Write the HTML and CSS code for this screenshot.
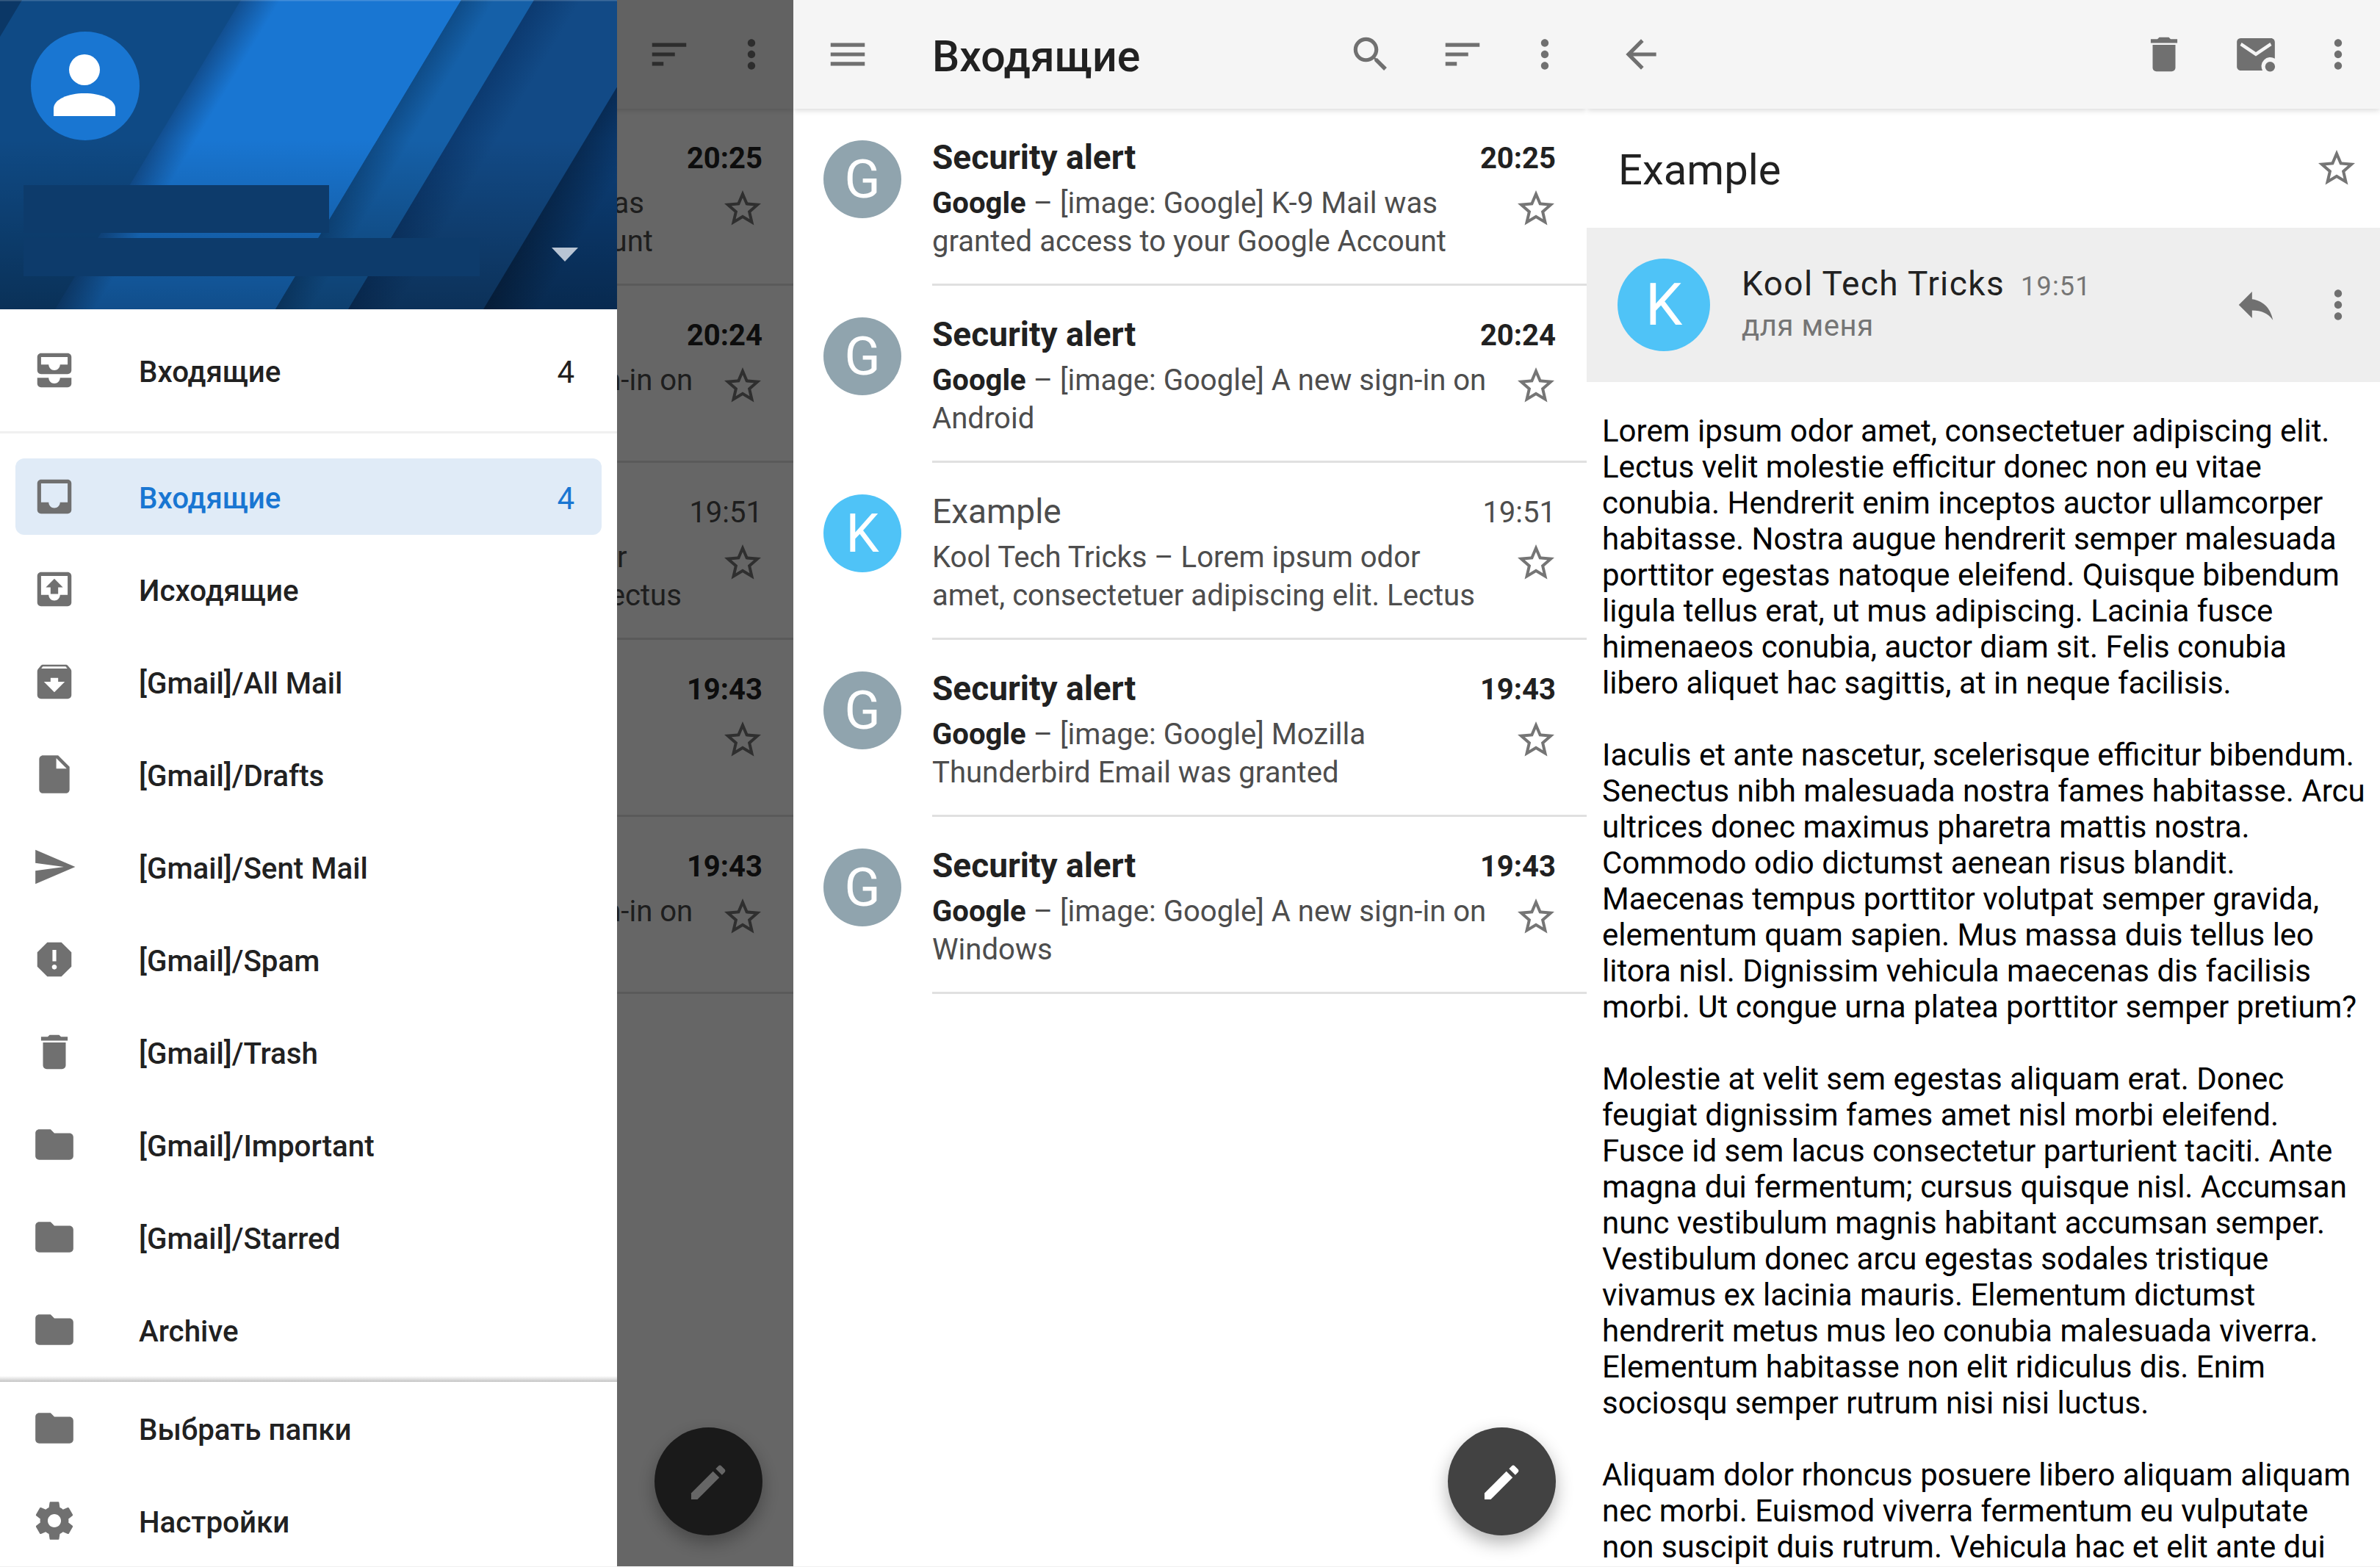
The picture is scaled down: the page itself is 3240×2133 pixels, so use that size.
FILE: index.html
```html
<!DOCTYPE html>
<html lang="ru">
<head>
    <meta charset="UTF-8">
    <title>Входящие</title>
    <link rel="stylesheet" href="styles.css">
</head>
<body>

    <!-- icon set -->
    <svg class="sprite" xmlns="http://www.w3.org/2000/svg">
        <symbol id="i-all-inbox" viewBox="0 0 24 24"><path d="M19 3H5c-1.1 0-2 .9-2 2v7c0 1.1.9 2 2 2h14c1.1 0 2-.9 2-2V5c0-1.1-.9-2-2-2zm0 6h-4c0 1.62-1.38 3-3 3s-3-1.38-3-3H5V5h14v4zm-4 7h6v3c0 1.1-.9 2-2 2H5c-1.1 0-2-.9-2-2v-3h6c0 1.66 1.34 3 3 3s3-1.34 3-3z"/></symbol>
        <symbol id="i-inbox" viewBox="0 0 24 24"><path d="M19 3H5c-1.1 0-2 .9-2 2v14c0 1.1.9 2 2 2h14c1.1 0 2-.9 2-2V5c0-1.1-.9-2-2-2zm0 12h-4c0 1.66-1.35 3-3 3s-3-1.34-3-3H5V5h14v10z"/></symbol>
        <symbol id="i-outbox" viewBox="0 0 24 24"><path d="M19 3H5c-1.1 0-2 .9-2 2v14c0 1.1.9 2 2 2h14c1.1 0 2-.9 2-2V5c0-1.1-.9-2-2-2zm0 12h-4c0 1.66-1.35 3-3 3s-3-1.34-3-3H5V5h14v10z"/><path d="M7.5 11H10v3.5h4V11h2.5L12 6.5z"/></symbol>
        <symbol id="i-archive" viewBox="0 0 24 24"><path d="M20.54 5.23l-1.39-1.68C18.88 3.21 18.47 3 18 3H6c-.47 0-.88.21-1.16.55L3.46 5.23C3.17 5.57 3 6.02 3 6.5V19c0 1.1.9 2 2 2h14c1.1 0 2-.9 2-2V6.5c0-.48-.17-.93-.46-1.27zM12 17.5L6.5 12H10v-2h4v2h3.5L12 17.5zM5.12 5l.81-1h12l.94 1H5.12z"/></symbol>
        <symbol id="i-draft" viewBox="0 0 24 24"><path d="M6 2c-1.1 0-1.99.9-1.99 2L4 20c0 1.1.89 2 1.99 2H18c1.1 0 2-.9 2-2V8l-6-6H6zm7 7V3.5L18.5 9H13z"/></symbol>
        <symbol id="i-send" viewBox="0 0 24 24"><path d="M2.01 21L23 12 2.01 3 2 10l15 2-15 2z"/></symbol>
        <symbol id="i-report" viewBox="0 0 24 24"><path d="M15.73 3H8.27L3 8.27v7.46L8.27 21h7.46L21 15.73V8.27L15.73 3zM12 17.3c-.72 0-1.3-.58-1.3-1.3 0-.72.58-1.3 1.3-1.3.72 0 1.3.58 1.3 1.3 0 .72-.58 1.3-1.3 1.3zm1-4.3h-2V7h2v6z"/></symbol>
        <symbol id="i-delete" viewBox="0 0 24 24"><path d="M6 19c0 1.1.9 2 2 2h8c1.1 0 2-.9 2-2V7H6v12zM19 4h-3.5l-1-1h-5l-1 1H5v2h14V4z"/></symbol>
        <symbol id="i-folder" viewBox="0 0 24 24"><path d="M10 4H4c-1.1 0-1.99.9-1.99 2L2 18c0 1.1.9 2 2 2h16c1.1 0 2-.9 2-2V8c0-1.1-.9-2-2-2h-8l-2-2z"/></symbol>
        <symbol id="i-settings" viewBox="0 0 24 24"><path d="M19.43 12.98c.04-.32.07-.64.07-.98s-.03-.66-.07-.98l2.11-1.65c.19-.15.24-.42.12-.64l-2-3.46c-.12-.22-.39-.3-.61-.22l-2.49 1c-.52-.4-1.08-.73-1.69-.98l-.38-2.65C14.46 2.18 14.25 2 14 2h-4c-.25 0-.46.18-.49.42l-.38 2.65c-.61.25-1.17.59-1.69.98l-2.49-1c-.23-.09-.49 0-.61.22l-2 3.46c-.13.22-.07.49.12.64l2.11 1.65c-.04.32-.07.65-.07.98s.03.66.07.98l-2.11 1.65c-.19.15-.24.42-.12.64l2 3.46c.12.22.39.3.61.22l2.49-1c.52.4 1.08.73 1.69.98l.38 2.65c.03.24.24.42.49.42h4c.25 0 .46-.18.49-.42l.38-2.65c.61-.25 1.17-.59 1.69-.98l2.49 1c.23.09.49 0 .61-.22l2-3.46c.12-.22.07-.49-.12-.64l-2.11-1.65zM12 15.5c-1.93 0-3.5-1.57-3.5-3.5s1.57-3.5 3.5-3.5 3.5 1.57 3.5 3.5-1.57 3.5-3.5 3.5z"/></symbol>
        <symbol id="i-menu" viewBox="0 0 24 24"><path d="M3 18h18v-2H3v2zm0-5h18v-2H3v2zm0-7v2h18V6H3z"/></symbol>
        <symbol id="i-search" viewBox="0 0 24 24"><path d="M15.5 14h-.79l-.28-.27C15.41 12.59 16 11.11 16 9.5 16 5.91 13.09 3 9.5 3S3 5.91 3 9.5 5.91 16 9.5 16c1.61 0 3.09-.59 4.23-1.57l.27.28v.79l5 4.99L20.49 19l-4.99-5zm-6 0C7.01 14 5 11.99 5 9.5S7.01 5 9.5 5 14 7.01 14 9.5 11.99 14 9.5 14z"/></symbol>
        <symbol id="i-sort" viewBox="0 0 24 24"><path d="M3 18h6v-2H3v2zM3 6v2h18V6H3zm0 7h12v-2H3v2z"/></symbol>
        <symbol id="i-more" viewBox="0 0 24 24"><path d="M12 8c1.1 0 2-.9 2-2s-.9-2-2-2-2 .9-2 2 .9 2 2 2zm0 2c-1.1 0-2 .9-2 2s.9 2 2 2 2-.9 2-2-.9-2-2-2zm0 6c-1.1 0-2 .9-2 2s.9 2 2 2 2-.9 2-2-.9-2-2-2z"/></symbol>
        <symbol id="i-back" viewBox="0 0 24 24"><path d="M20 11H7.83l5.59-5.59L12 4l-8 8 8 8 1.41-1.41L7.83 13H20v-2z"/></symbol>
        <symbol id="i-unread" viewBox="0 0 24 24"><path fill-rule="evenodd" d="M4 3.500h16c1.100 0 2 .9 2 2v8.700a4.700 4.700 0 0 0-6.500 6.300H4c-1.100 0-2-.9-2-2v-13c0-1.100.9-2 2-2zm.5 2.300L3.700 7.400l8.300 5.600 8.300-5.600-.8-1.600-7.500 5z"/><circle cx="19.500" cy="18.500" r="2.600"/></symbol>
        <symbol id="i-reply" viewBox="0 0 24 24"><path d="M10 9V5l-7 7 7 7v-4.100c5 0 8.500 1.600 11 5.100-1-5-4-10-11-11z"/></symbol>
        <symbol id="i-star" viewBox="0 0 24 24"><path d="M22 9.240l-7.190-.62L12 2 9.190 8.630 2 9.240l5.460 4.730L5.820 21 12 17.270 18.180 21l-1.630-7.030L22 9.240zM12 15.400l-3.760 2.270 1-4.280-3.320-2.880 4.380-.38L12 6.100l1.710 4.040 4.380.38-3.320 2.880 1 4.280L12 15.400z"/></symbol>
        <symbol id="i-edit" viewBox="0 0 24 24"><path d="M3.500 20.500v-3L14 7l3 3L6.500 20.500z"/><path d="M15.300 5.700l1.300-1.300c.4-.4 1-.4 1.400 0l1.600 1.600c.4.4.4 1 0 1.400l-1.300 1.300z"/></symbol>
    </svg>

    <div class="app">

        <!-- left pane: message list behind the open drawer -->
        <section class="pane">
            <header class="toolbar">
                <svg class="icon"><use href="#i-menu"/></svg>
                <h1 class="toolbar-title">Входящие</h1>
                <svg class="icon tool-search"><use href="#i-search"/></svg>
                <svg class="icon tool-sort"><use href="#i-sort"/></svg>
                <svg class="icon tool-more"><use href="#i-more"/></svg>
            </header>
            <div class="mail-list">
                <div class="mail-row unread">
                    <div class="avatar grey">G</div>
                    <div class="mail-main">
                        <div class="mail-top"><span class="subject">Security alert</span><span class="time">20:25</span></div>
                        <div class="mail-bottom">
                            <p class="preview"><b>Google</b> – [image: Google] K-9 Mail was granted access to your Google Account</p>
                            <svg class="star"><use href="#i-star"/></svg>
                        </div>
                    </div>
                </div>
                <div class="mail-row unread">
                    <div class="avatar grey">G</div>
                    <div class="mail-main">
                        <div class="mail-top"><span class="subject">Security alert</span><span class="time">20:24</span></div>
                        <div class="mail-bottom">
                            <p class="preview"><b>Google</b> – [image: Google] A new sign-in on Android</p>
                            <svg class="star"><use href="#i-star"/></svg>
                        </div>
                    </div>
                </div>
                <div class="mail-row">
                    <div class="avatar sky">K</div>
                    <div class="mail-main">
                        <div class="mail-top"><span class="subject">Example</span><span class="time">19:51</span></div>
                        <div class="mail-bottom">
                            <p class="preview">Kool Tech Tricks – Lorem ipsum odor amet, consectetuer adipiscing elit. Lectus</p>
                            <svg class="star"><use href="#i-star"/></svg>
                        </div>
                    </div>
                </div>
                <div class="mail-row unread">
                    <div class="avatar grey">G</div>
                    <div class="mail-main">
                        <div class="mail-top"><span class="subject">Security alert</span><span class="time">19:43</span></div>
                        <div class="mail-bottom">
                            <p class="preview"><b>Google</b> – [image: Google] Mozilla Thunderbird Email was granted</p>
                            <svg class="star"><use href="#i-star"/></svg>
                        </div>
                    </div>
                </div>
                <div class="mail-row unread">
                    <div class="avatar grey">G</div>
                    <div class="mail-main">
                        <div class="mail-top"><span class="subject">Security alert</span><span class="time">19:43</span></div>
                        <div class="mail-bottom">
                            <p class="preview"><b>Google</b> – [image: Google] A new sign-in on Windows</p>
                            <svg class="star"><use href="#i-star"/></svg>
                        </div>
                    </div>
                </div>
            </div>
            <button class="fab"><svg class="fab-icon"><use href="#i-edit"/></svg></button>

            <div class="scrim"></div>

            <aside class="drawer">
                <div class="drawer-head">
                    <svg class="drawer-art" viewBox="0 0 840 421" preserveAspectRatio="none">
                        <defs>
                            <linearGradient id="g-bright" gradientUnits="userSpaceOnUse" x1="328" y1="0" x2="548" y2="132">
                                <stop offset="0" stop-color="#124f91"/>
                                <stop offset=".18" stop-color="#1976d2"/>
                            </linearGradient>
                            <linearGradient id="g-mid" gradientUnits="userSpaceOnUse" x1="628" y1="0" x2="702" y2="44">
                                <stop offset="0" stop-color="#0f4c88"/>
                                <stop offset=".45" stop-color="#1560a8"/>
                            </linearGradient>
                            <linearGradient id="g-dark" gradientUnits="userSpaceOnUse" x1="727" y1="0" x2="862" y2="81">
                                <stop offset="0" stop-color="#0c3a70"/>
                                <stop offset=".35" stop-color="#124a86"/>
                            </linearGradient>
                            <linearGradient id="g-far" gradientUnits="userSpaceOnUse" x1="911" y1="0" x2="1000" y2="53">
                                <stop offset="0" stop-color="#082b54"/>
                                <stop offset=".6" stop-color="#0c3f78"/>
                            </linearGradient>
                            <linearGradient id="g-fade" x1="0" y1="0" x2="0" y2="1">
                                <stop offset=".45" stop-color="#000" stop-opacity="0"/>
                                <stop offset="1" stop-color="#000" stop-opacity=".34"/>
                            </linearGradient>
                        </defs>
                        <rect width="840" height="421" fill="#0f4a85"/>
                        <polygon points="0,0 30,0 0,50" fill="#0b3766"/>
                        <polygon points="328,0 628,0 375,421 75,421" fill="url(#g-bright)"/>
                        <polygon points="628,0 727,0 474,421 375,421" fill="url(#g-mid)"/>
                        <polygon points="727,0 911,0 658,421 474,421" fill="url(#g-dark)"/>
                        <polygon points="911,0 1200,0 1200,421 658,421" fill="url(#g-far)"/>
                        <rect width="840" height="421" fill="url(#g-fade)"/>
                        <rect width="840" height="1.500" fill="#fff" fill-opacity=".18"/>
                    </svg>
                    <svg class="account-pic" viewBox="0 0 148 148">
                        <circle cx="74" cy="74" r="74" fill="#1976d2"/>
                        <circle cx="73" cy="52" r="21" fill="#fff"/>
                        <path d="M31 115v-10c0-13 20-21 42-21s42 8 42 21v10z" fill="#fff"/>
                    </svg>
                    <div class="redacted redacted-name"></div>
                    <div class="redacted redacted-mail"></div>
                    <div class="account-arrow"></div>
                </div>

                <div class="folder account-row">
                    <svg class="icon"><use href="#i-all-inbox"/></svg>
                    <span class="folder-name">Входящие</span>
                    <span class="folder-count">4</span>
                </div>

                <nav class="folders">
                    <div class="folder active">
                        <svg class="icon"><use href="#i-inbox"/></svg>
                        <span class="folder-name">Входящие</span>
                        <span class="folder-count">4</span>
                    </div>
                    <div class="folder"><svg class="icon"><use href="#i-outbox"/></svg><span class="folder-name">Исходящие</span></div>
                    <div class="folder"><svg class="icon"><use href="#i-archive"/></svg><span class="folder-name">[Gmail]/All Mail</span></div>
                    <div class="folder"><svg class="icon"><use href="#i-draft"/></svg><span class="folder-name">[Gmail]/Drafts</span></div>
                    <div class="folder"><svg class="icon"><use href="#i-send"/></svg><span class="folder-name">[Gmail]/Sent Mail</span></div>
                    <div class="folder"><svg class="icon"><use href="#i-report"/></svg><span class="folder-name">[Gmail]/Spam</span></div>
                    <div class="folder"><svg class="icon"><use href="#i-delete"/></svg><span class="folder-name">[Gmail]/Trash</span></div>
                    <div class="folder"><svg class="icon"><use href="#i-folder"/></svg><span class="folder-name">[Gmail]/Important</span></div>
                    <div class="folder"><svg class="icon"><use href="#i-folder"/></svg><span class="folder-name">[Gmail]/Starred</span></div>
                    <div class="folder"><svg class="icon"><use href="#i-folder"/></svg><span class="folder-name">Archive</span></div>
                </nav>

                <div class="drawer-rule"></div>

                <div class="folder"><svg class="icon"><use href="#i-folder"/></svg><span class="folder-name">Выбрать папки</span></div>
                <div class="folder"><svg class="icon"><use href="#i-settings"/></svg><span class="folder-name">Настройки</span></div>
            </aside>
        </section>

        <!-- middle pane: message list -->
        <section class="pane">
            <header class="toolbar">
                <svg class="icon"><use href="#i-menu"/></svg>
                <h1 class="toolbar-title">Входящие</h1>
                <svg class="icon tool-search"><use href="#i-search"/></svg>
                <svg class="icon tool-sort"><use href="#i-sort"/></svg>
                <svg class="icon tool-more"><use href="#i-more"/></svg>
            </header>
            <div class="mail-list">
                <div class="mail-row unread">
                    <div class="avatar grey">G</div>
                    <div class="mail-main">
                        <div class="mail-top"><span class="subject">Security alert</span><span class="time">20:25</span></div>
                        <div class="mail-bottom">
                            <p class="preview"><b>Google</b> – [image: Google] K-9 Mail was granted access to your Google Account</p>
                            <svg class="star"><use href="#i-star"/></svg>
                        </div>
                    </div>
                </div>
                <div class="mail-row unread">
                    <div class="avatar grey">G</div>
                    <div class="mail-main">
                        <div class="mail-top"><span class="subject">Security alert</span><span class="time">20:24</span></div>
                        <div class="mail-bottom">
                            <p class="preview"><b>Google</b> – [image: Google] A new sign-in on Android</p>
                            <svg class="star"><use href="#i-star"/></svg>
                        </div>
                    </div>
                </div>
                <div class="mail-row">
                    <div class="avatar sky">K</div>
                    <div class="mail-main">
                        <div class="mail-top"><span class="subject">Example</span><span class="time">19:51</span></div>
                        <div class="mail-bottom">
                            <p class="preview">Kool Tech Tricks – Lorem ipsum odor amet, consectetuer adipiscing elit. Lectus</p>
                            <svg class="star"><use href="#i-star"/></svg>
                        </div>
                    </div>
                </div>
                <div class="mail-row unread">
                    <div class="avatar grey">G</div>
                    <div class="mail-main">
                        <div class="mail-top"><span class="subject">Security alert</span><span class="time">19:43</span></div>
                        <div class="mail-bottom">
                            <p class="preview"><b>Google</b> – [image: Google] Mozilla Thunderbird Email was granted</p>
                            <svg class="star"><use href="#i-star"/></svg>
                        </div>
                    </div>
                </div>
                <div class="mail-row unread">
                    <div class="avatar grey">G</div>
                    <div class="mail-main">
                        <div class="mail-top"><span class="subject">Security alert</span><span class="time">19:43</span></div>
                        <div class="mail-bottom">
                            <p class="preview"><b>Google</b> – [image: Google] A new sign-in on Windows</p>
                            <svg class="star"><use href="#i-star"/></svg>
                        </div>
                    </div>
                </div>
            </div>
            <button class="fab"><svg class="fab-icon"><use href="#i-edit"/></svg></button>
        </section>

        <!-- right pane: open message -->
        <section class="pane">
            <header class="toolbar">
                <svg class="icon"><use href="#i-back"/></svg>
                <svg class="icon tool-delete"><use href="#i-delete"/></svg>
                <svg class="icon tool-sort"><use href="#i-unread"/></svg>
                <svg class="icon tool-more"><use href="#i-more"/></svg>
            </header>
            <div class="message-title">
                <h2 class="message-subject">Example</h2>
                <svg class="star"><use href="#i-star"/></svg>
            </div>
            <div class="message-head">
                <div class="avatar sky avatar-large">K</div>
                <div class="sender">
                    <div class="sender-line"><span class="sender-name">Kool Tech Tricks</span><span class="sender-time">19:51</span></div>
                    <div class="sender-to">для меня</div>
                </div>
                <svg class="icon tool-delete"><use href="#i-reply"/></svg>
                <svg class="icon tool-more"><use href="#i-more"/></svg>
            </div>
            <div class="message-body">
                <p>Lorem ipsum odor amet, consectetuer adipiscing elit. Lectus velit molestie efficitur donec non eu vitae conubia. Hendrerit enim inceptos auctor ullamcorper habitasse. Nostra augue hendrerit semper malesuada porttitor egestas natoque eleifend. Quisque bibendum ligula tellus erat, ut mus adipiscing. Lacinia fusce himenaeos conubia, auctor diam sit. Felis conubia libero aliquet hac sagittis, at in neque facilisis.</p>
                <p>Iaculis et ante nascetur, scelerisque efficitur bibendum. Senectus nibh malesuada nostra fames habitasse. Arcu ultrices donec maximus pharetra mattis nostra. Commodo odio dictumst aenean risus blandit. Maecenas tempus porttitor volutpat semper gravida, elementum quam sapien. Mus massa duis tellus leo litora nisl. Dignissim vehicula maecenas dis facilisis morbi. Ut congue urna platea porttitor semper pretium?</p>
                <p>Molestie at velit sem egestas aliquam erat. Donec feugiat dignissim fames amet nisl morbi eleifend. Fusce id sem lacus consectetur parturient taciti. Ante magna dui fermentum; cursus quisque nisl. Accumsan nunc vestibulum magnis habitant accumsan semper. Vestibulum donec arcu egestas sodales tristique vivamus ex lacinia mauris. Elementum dictumst hendrerit metus mus leo conubia malesuada viverra. Elementum habitasse non elit ridiculus dis. Enim sociosqu semper rutrum nisi nisi luctus.</p>
                <p>Aliquam dolor rhoncus posuere libero aliquam aliquam nec morbi. Euismod viverra fermentum eu vulputate non suscipit duis rutrum. Vehicula hac et elit ante dui</p>
            </div>
        </section>

    </div>

</body>
</html>
```
FILE: styles.css
```css
* {
    box-sizing: border-box;
}
html, body {
    margin: 0;
    height: 100%;
}
body {
    font-family: Roboto, "Noto Sans", sans-serif;
    background-color: #f0f0f0;
    color: #212121;
    overflow: hidden;
}
.sprite {
    display: none;
}
.app {
    display: flex;
    width: 3240px;
    height: 2132px;
    background-color: #fff;
}
.pane {
    position: relative;
    flex: 0 0 1080px;
    height: 100%;
    overflow: hidden;
}
.icon {
    flex: none;
    width: 62px;
    height: 62px;
    fill: #707070;
}

/* toolbar */
.toolbar {
    position: relative;
    z-index: 1;
    display: flex;
    align-items: center;
    height: 148px;
    padding: 0 26px 0 43px;
    background-color: #f5f5f5;
    box-shadow: 0 2px 8px rgba(0, 0, 0, 0.16);
}
.toolbar-title {
    flex: 1;
    margin: 4px 0 0 84px;
    font-size: 59px;
    font-weight: 500;
    color: #212121;
}
.tool-sort {
    margin-left: 63px;
}
.tool-more {
    margin-left: 50px;
}
.tool-delete {
    margin-left: auto;
}

/* message rows */
.mail-row {
    display: flex;
    height: 241px;
    padding-left: 41px;
}
.avatar {
    flex: none;
    display: flex;
    align-items: center;
    justify-content: center;
    width: 106px;
    height: 106px;
    margin: 43px 42px 0 0;
    border-radius: 50%;
    color: #fff;
    font-size: 72px;
}
.avatar.grey {
    background-color: #90a4ae;
}
.avatar.sky {
    background-color: #4fc3f7;
}
.mail-main {
    flex: 1;
    padding: 36px 39px 0 0;
    border-bottom: 3px solid #e0e0e0;
}
.mail-top {
    display: flex;
    justify-content: space-between;
    align-items: center;
    height: 60px;
    padding-right: 3px;
}
.subject {
    font-size: 46px;
    color: #4d4d4d;
}
.time {
    padding-top: 2px;
    font-size: 40px;
    color: #4d4d4d;
}
.unread .subject, .unread .time {
    font-weight: 700;
    color: #212121;
}
.mail-bottom {
    display: flex;
    justify-content: space-between;
    margin-top: 7px;
}
.preview {
    width: 771px;
    margin: 0;
    font-size: 40.1px;
    line-height: 52px;
    color: #4d4d4d;
}
.preview b {
    font-weight: 700;
    color: #212121;
}
.star {
    flex: none;
    width: 60px;
    height: 60px;
    margin-top: 3px;
    fill: #757575;
}

/* floating button */
.fab {
    position: absolute;
    left: 891px;
    top: 1943px;
    display: flex;
    align-items: center;
    justify-content: center;
    width: 147px;
    height: 147px;
    padding: 0;
    border: 0;
    border-radius: 50%;
    background-color: #424242;
    box-shadow: 0 10px 24px rgba(0, 0, 0, 0.3);
}
.fab-icon {
    width: 68px;
    height: 68px;
    fill: #fff;
}

/* drawer over the left pane */
.scrim {
    position: absolute;
    inset: 0;
    z-index: 2;
    background-color: rgba(0, 0, 0, 0.6);
}
.drawer {
    position: absolute;
    top: 0;
    left: 0;
    bottom: 0;
    z-index: 3;
    width: 840px;
    background-color: #fff;
}
.drawer-head {
    position: relative;
    height: 421px;
    padding: 43px 32px 0;
    overflow: hidden;
}
.drawer-art {
    position: absolute;
    top: 0;
    left: 0;
    width: 100%;
    height: 100%;
}
.account-pic {
    position: relative;
    display: block;
    width: 148px;
    height: 148px;
    margin-left: 10px;
}
.redacted {
    position: relative;
    background-color: #0d3b6b;
}
.redacted-name {
    width: 416px;
    height: 65px;
    margin-top: 61px;
}
.redacted-mail {
    width: 621px;
    height: 52px;
    margin-top: 7px;
}
.account-arrow {
    position: absolute;
    left: 751px;
    top: 337px;
    width: 0;
    height: 0;
    border-left: 18px solid transparent;
    border-right: 18px solid transparent;
    border-top: 19px solid #b9c5d4;
}
.folder {
    display: flex;
    align-items: center;
    height: 126px;
    padding: 0 58px 0 43px;
}
.folder-name {
    flex: 1;
    margin-left: 84px;
    padding-top: 5px;
    font-size: 40.3px;
    font-weight: 500;
    color: #212121;
}
.folder-count {
    padding-top: 5px;
    font-size: 42px;
    color: #212121;
}
.account-row {
    height: 169px;
    border-bottom: 3px solid #f0f0f0;
}
.folders {
    padding-top: 23px;
}
.folder.active {
    height: 104px;
    margin: 11px 21px;
    padding-left: 22px;
    padding-right: 37px;
    border-radius: 12px;
    background-color: #e0ebf7;
}
.folder.active .folder-name, .folder.active .folder-count {
    color: #1976d2;
}
.drawer-rule {
    height: 8px;
    background: linear-gradient(#fff, #c4c4c4);
}

/* open message */
.message-title {
    display: flex;
    align-items: center;
    justify-content: space-between;
    height: 162px;
    padding: 0 29px 0 43px;
}
.message-title .star {
    margin-top: 0;
}
.message-subject {
    margin: 4px 0 0;
    font-size: 58px;
    font-weight: 400;
    color: #212121;
}
.message-head {
    display: flex;
    align-items: center;
    height: 210px;
    padding: 0 26px 0 42px;
    background-color: #eee;
}
.avatar-large {
    width: 126px;
    height: 126px;
    margin: 0 43px 0 0;
    font-size: 80px;
}
.sender-line, .sender-to {
    display: flex;
    align-items: baseline;
    height: 58px;
    line-height: 58px;
}
.sender-name {
    font-size: 46px;
    letter-spacing: 1.4px;
    color: #212121;
}
.sender-time {
    margin-left: 22px;
    font-size: 36px;
    letter-spacing: 1.2px;
    color: #757575;
}
.sender-to {
    font-size: 40px;
    letter-spacing: .6px;
    color: #757575;
}
.message-body {
    padding: 42px 20px 0 21px;
    font-size: 42px;
    line-height: 49px;
    color: #000;
}
.message-body p {
    margin: 0 0 49px;
}
```
